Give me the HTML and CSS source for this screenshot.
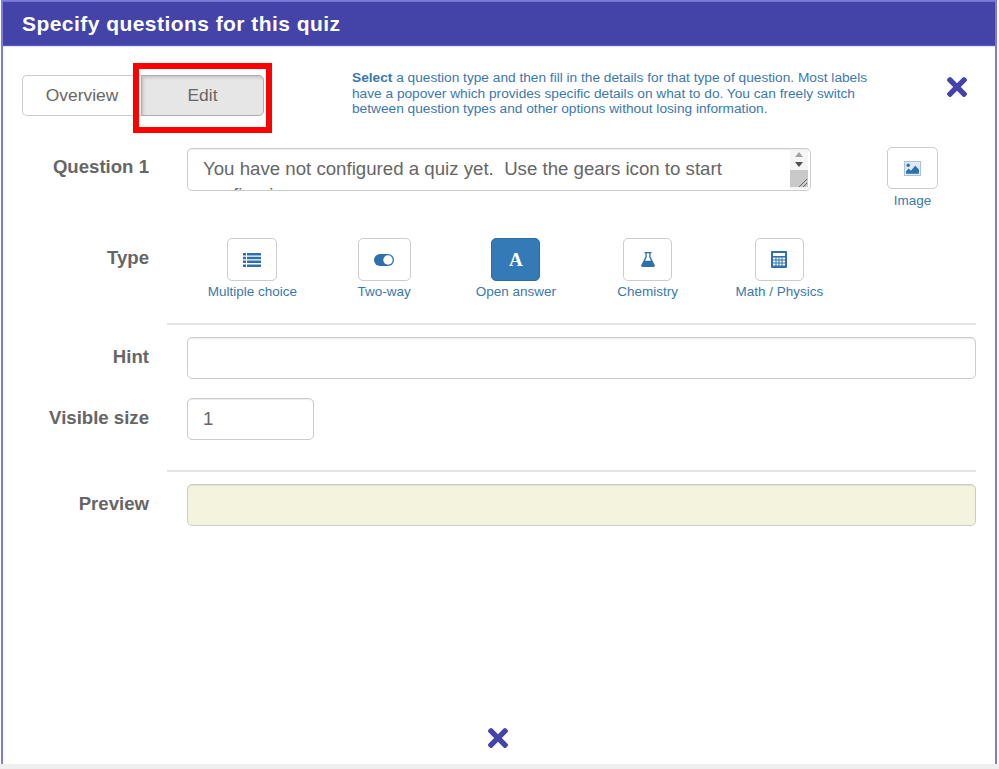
FILE: index.html
```html
<!DOCTYPE html>
<html lang="en">
<head>
<meta charset="utf-8">
<title>Specify questions for this quiz</title>
<link rel="stylesheet" href="styles.css">
</head>
<body>
<div class="dialog">
  <header class="title-bar">Specify questions for this quiz</header>
  <div class="dialog-body">
    <div class="top-row">
      <div class="tabs">
        <button class="tab">Overview</button>
        <button class="tab tab-active">Edit</button>
        <span class="highlight"></span>
      </div>
      <p class="help"><b>Select</b> a question type and then fill in the details for that type of question. Most labels have a popover which provides specific details on what to do. You can freely switch between question types and other options without losing information.</p>
      <svg class="close close-top" viewBox="0 80 352 352"><path d="M242.72 256l100.07-100.07c12.28-12.28 12.28-32.19 0-44.48l-22.24-22.24c-12.28-12.28-32.19-12.28-44.48 0L176 189.28 75.93 89.21c-12.28-12.28-32.19-12.28-44.48 0L9.21 111.45c-12.28 12.28-12.28 32.19 0 44.48L109.28 256 9.21 356.07c-12.28 12.28-12.28 32.19 0 44.48l22.24 22.24c12.28 12.28 32.2 12.28 44.48 0L176 322.72l100.07 100.07c12.28 12.28 32.2 12.28 44.48 0l22.24-22.24c12.28-12.28 12.28-32.19 0-44.48L242.72 256z"/></svg>
    </div>

    <div class="row row-question">
      <div class="label">Question 1</div>
      <div class="field textarea">
        <div class="textarea-text">You have not configured a quiz yet.  Use the gears icon to start configuring.</div>
        <div class="scrollbar">
          <span class="arrow-up"></span>
          <span class="arrow-down"></span>
          <span class="thumb"></span>
          <svg class="grip" viewBox="0 0 12 12"><path d="M11 3 3 11M11 7 7 11" stroke="#666" fill="none"/></svg>
        </div>
      </div>
      <div class="image-picker">
        <button class="icon-btn image-btn">
          <svg class="ico" viewBox="0 0 16 14"><path fill-rule="evenodd" d="M0 0h16v14H0zM1 1v12h14V1z" fill="#a9c3dc"/><path d="M1 1h14v12H1z" fill="#dfe9f3"/><circle cx="4" cy="4" r="1.6"/><path d="M2 12V9.5L4.5 7 6.5 9l4-4.500L14 8v4z"/></svg>
        </button>
        <span class="caption">Image</span>
      </div>
    </div>

    <div class="row row-type">
      <div class="label">Type</div>
      <div class="types">
        <div class="type">
          <button class="icon-btn w50">
            <svg class="ico list" viewBox="0 0 18 14"><path d="M0 0h3v2.500H0zM4 0h14v2.500H4zM0 3.800h3v2.500H0zM4 3.800h14v2.500H4zM0 7.600h3v2.500H0zM4 7.600h14v2.500H4zM0 11.400h3v2.500H0zM4 11.400h14v2.500H4z"/></svg>
          </button>
          <span class="caption">Multiple choice</span>
        </div>
        <div class="type">
          <button class="icon-btn w53">
            <svg class="ico toggle" viewBox="0 0 20 12"><rect width="20" height="12" rx="6"/><circle cx="14" cy="6" r="4.700" fill="#fff"/></svg>
          </button>
          <span class="caption">Two-way</span>
        </div>
        <div class="type">
          <button class="icon-btn w49 icon-btn-active"><span class="font-a">A</span></button>
          <span class="caption">Open answer</span>
        </div>
        <div class="type">
          <button class="icon-btn w49">
            <svg class="ico flask" viewBox="0 0 14 15"><path fill-rule="evenodd" d="M3.500 0h7v1.300H9.600v3.800l4.100 8c.5 1-.1 1.900-1.100 1.900H1.400C.4 15-.2 14.100.3 13.100l4.100-8V1.300h-.9zM5.700 1.300v4.100L4 8.700h6L8.300 5.400V1.300z"/></svg>
          </button>
          <span class="caption">Chemistry</span>
        </div>
        <div class="type">
          <button class="icon-btn w49">
            <svg class="ico calc" viewBox="0 0 16 17"><path fill-rule="evenodd" d="M1 0h14a1 1 0 0 1 1 1v15a1 1 0 0 1-1 1H1a1 1 0 0 1-1-1V1a1 1 0 0 1 1-1zM2 2v3h12V2zM2 6.500v2h2.500v-2zM5.500 6.500v2h2v-2zM8.500 6.500v2h2v-2zM11.500 6.500v2H14v-2zM2 9.500v2h2.500v-2zM5.500 9.500v2h2v-2zM8.500 9.500v2h2v-2zM11.500 9.500v2H14v-2zM2 12.500v2h2.500v-2zM5.500 12.500v2h2v-2zM8.500 12.500v2h2v-2zM11.500 12.500v2H14v-2z"/></svg>
          </button>
          <span class="caption">Math / Physics</span>
        </div>
      </div>
    </div>

    <div class="rule rule-first"></div>

    <div class="row row-hint">
      <div class="label">Hint</div>
      <div class="field input grow"></div>
    </div>

    <div class="row row-size">
      <div class="label">Visible size</div>
      <div class="field input small">1</div>
    </div>

    <div class="rule rule-second"></div>

    <div class="row row-preview">
      <div class="label">Preview</div>
      <div class="field input grow preview"></div>
    </div>

    <div class="bottom">
      <svg class="close" viewBox="0 80 352 352"><path d="M242.72 256l100.07-100.07c12.28-12.28 12.28-32.19 0-44.48l-22.24-22.24c-12.28-12.28-32.19-12.28-44.48 0L176 189.28 75.93 89.21c-12.28-12.28-32.19-12.28-44.48 0L9.21 111.45c-12.28 12.28-12.28 32.19 0 44.48L109.28 256 9.21 356.07c-12.28 12.28-12.28 32.19 0 44.48l22.24 22.24c12.28 12.28 32.2 12.28 44.48 0L176 322.72l100.07 100.07c12.28 12.28 32.2 12.28 44.48 0l22.24-22.24c12.28-12.28 12.28-32.19 0-44.48L242.72 256z"/></svg>
    </div>
  </div>
</div>
<div class="page-band"></div>
</body>
</html>
```
FILE: styles.css
```css
* { box-sizing: border-box; }
html, body { margin: 0; padding: 0; }
body {
  width: 999px;
  height: 769px;
  overflow: hidden;
  background: #fff;
  font-family: "Liberation Sans", Arial, sans-serif;
  color: #666;
}
.dialog {
  width: 996px;
  height: 764px;
  margin-left: 1px;
  background: #fff;
  border-left: 2px solid #7f7cd6;
  border-right: 2px solid #7f7cd6;
  border-top: 1px solid #7f7cd6;
  display: flex;
  flex-direction: column;
}
.page-band {
  height: 5px;
  background: #eeeeee;
}
.title-bar {
  height: 45px;
  padding-left: 19px;
  background: #4343a8;
  border-top: 1px solid #7471d2;
  border-bottom: 1px solid #5b59c4;
  box-shadow: 0 1px 0 #dcdcf5;
  color: #fff;
  font-size: 21px;
  font-weight: 700;
  line-height: 44px;
  letter-spacing: 0.45px;
}
.dialog-body {
  flex: 1;
  display: flex;
  flex-direction: column;
}
.top-row {
  display: flex;
  align-items: flex-start;
  padding: 23px 0 0 19px;
  height: 102px;
}
.tabs {
  position: relative;
  display: flex;
  margin-top: 6px;
}
.tab {
  height: 41px;
  width: 119px;
  padding: 0;
  background: #fff;
  border: 1px solid #ccc;
  border-radius: 5px 0 0 5px;
  border-right: 0;
  font: 17.4px "Liberation Sans", Arial, sans-serif;
  color: #666;
}
.tab-active {
  width: 123px;
  background: #e6e6e6;
  border: 1px solid #adadad;
  border-radius: 0 5px 5px 0;
  box-shadow: inset 2px 2px 3px rgba(0, 0, 0, .13);
}
.highlight {
  position: absolute;
  left: 111px;
  top: -12px;
  width: 139px;
  height: 70px;
  border: 6px solid #fe0000;
  pointer-events: none;
}
.help {
  margin: 1px 0 0 88px;
  width: 520px;
  flex-shrink: 0;
  color: #3b78ad;
  font-size: 13.7px;
  line-height: 15.5px;
}
.help b { font-weight: 700; }
.close { width: 20px; height: 20px; fill: #4343a8; display: block; }
.close-top { margin: 8px 0 0 75px; }
.row {
  display: flex;
  align-items: flex-start;
}
.label {
  width: 146px;
  margin-right: 38px;
  text-align: right;
  font-size: 18.6px;
  font-weight: 700;
  color: #666;
}
.field {
  background: #fff;
  border: 1px solid #ccc;
  border-radius: 5px;
  box-shadow: inset 0 1px 1px rgba(0, 0, 0, .075);
  font-size: 18.6px;
  color: #666;
}
.row-question { height: 90px; }
.row-question .label { margin-top: 8px; }
.textarea {
  position: relative;
  width: 624px;
  height: 43px;
  overflow: hidden;
}
.textarea-text {
  width: 590px;
  padding: 7px 0 0 15px;
  font-size: 18.67px;
  line-height: 26px;
  white-space: pre-wrap;
}
.scrollbar {
  position: absolute;
  right: 2px;
  top: 1px;
  bottom: 1px;
  width: 18px;
  background: #f5f5f5;
}
.arrow-up, .arrow-down {
  position: absolute;
  left: 5px;
  width: 0;
  height: 0;
  border-left: 4px solid transparent;
  border-right: 4px solid transparent;
}
.arrow-up { top: 2px; border-bottom: 5px solid #a3a3a3; }
.arrow-down { top: 12px; border-top: 5px solid #505050; }
.thumb {
  position: absolute;
  left: 0;
  right: 0;
  top: 20px;
  bottom: 2px;
  background: #c9c9c9;
}
.grip {
  position: absolute;
  right: 0;
  bottom: 1px;
  width: 12px;
  height: 12px;
}
.image-picker {
  margin: -1px 0 0 76px;
  display: flex;
  flex-direction: column;
  align-items: center;
  width: 51px;
  gap: 5px;
}
.icon-btn {
  height: 43px;
  padding: 0;
  display: flex;
  align-items: center;
  justify-content: center;
  background: #fff;
  border: 1px solid #ccc;
  border-radius: 5px;
}
.image-btn { width: 51px; height: 42px; }
.image-btn .ico { width: 19px; height: 15px; }
.w50 { width: 50px; }
.w53 { width: 53px; }
.w49 { width: 49px; }
.icon-btn-active {
  background: #337ab7;
  border-color: #2e6da4;
}
.font-a {
  color: #fff;
  font: 700 19px "Liberation Serif", serif;
}
.ico { width: 16px; height: 14px; fill: #2f6fab; display: block; }
.list { width: 18px; }
.toggle { width: 20px; height: 12px; }
.flask { width: 14px; height: 15px; }
.calc { width: 16px; height: 17px; }
.caption {
  color: #3b78ad;
  font-size: 13.5px;
  line-height: 14px;
  white-space: nowrap;
}
.row-type { height: 85px; }
.row-type .label { margin-top: 9px; }
.types {
  display: grid;
  grid-template-columns: repeat(5, 131.75px);
  margin-left: -0.5px;
}
.type {
  display: flex;
  flex-direction: column;
  align-items: center;
  gap: 4px;
}
.rule {
  height: 2px;
  margin-left: 164px;
  margin-right: 19px;
  background: #e4e4e4;
}
.rule-second { margin-top: 30px; }
.input {
  height: 42px;
  line-height: 40px;
  padding-left: 15px;
}
.grow { width: 789px; }
.small { width: 127px; }
.row-hint { margin-top: 12px; }
.row-hint .label, .row-size .label, .row-preview .label { margin-top: 9px; }
.row-size { margin-top: 19px; }
.row-preview { margin-top: 12px; }
.preview { background: #f4f4de; }
.bottom {
  margin-top: 202px;
  padding-left: 485px;
}
```
